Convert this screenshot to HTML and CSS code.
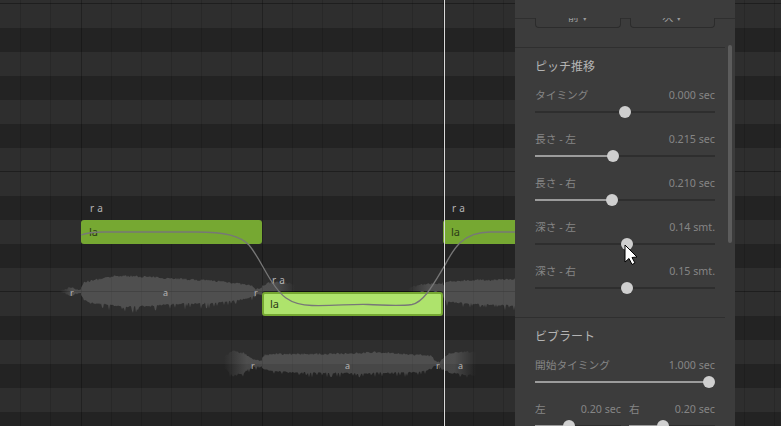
FILE: index.html
```html
<!DOCTYPE html>
<html lang="ja">

<head>
  <meta charset="UTF-8">
  <title>Piano Roll</title>
  <link rel="stylesheet" href="styles.css">
</head>

<body>

  <div class="roll">
    <div class="rows">
      <div class="row line"></div>
      <div class="row"></div>
      <div class="row dark"></div>
      <div class="row"></div>
      <div class="row dark"></div>
      <div class="row"></div>
      <div class="row dark"></div>
      <div class="row line"></div>
      <div class="row"></div>
      <div class="row dark"></div>
      <div class="row"></div>
      <div class="row dark"></div>
      <div class="row line"></div>
      <div class="row"></div>
      <div class="row dark"></div>
      <div class="row"></div>
      <div class="row dark"></div>
      <div class="row"></div>
      <div class="row dark"></div>
    </div>
    <div class="beats"></div>

    <svg class="layer" id="waves" width="781" height="426">
      <defs>
        <linearGradient id="fadeIn">
          <stop offset="0" stop-color="#9a9a9a" stop-opacity="0"></stop>
          <stop offset="0.6" stop-color="#9a9a9a" stop-opacity="0.3"></stop>
        </linearGradient>
        <linearGradient id="fadeOut">
          <stop offset="0.4" stop-color="#9a9a9a" stop-opacity="0.3"></stop>
          <stop offset="1" stop-color="#9a9a9a" stop-opacity="0"></stop>
        </linearGradient>
      </defs>
    </svg>

    <span class="phone small" style="left: 70px; top: 286px">r</span>
    <span class="phone small" style="left: 163px; top: 286px">a</span>
    <span class="phone small" style="left: 254px; top: 286px">r</span>
    <span class="phone small" style="left: 277px; top: 286px">r</span>
    <span class="phone small" style="left: 420px; top: 286px">r</span>
    <span class="phone small" style="left: 433px; top: 286px">a</span>
    <span class="phone small" style="left: 251px; top: 359px">r</span>
    <span class="phone small" style="left: 345px; top: 359px">a</span>
    <span class="phone small" style="left: 436px; top: 359px">r</span>
    <span class="phone small" style="left: 458px; top: 359px">a</span>

    <span class="phone" style="left: 90px; top: 201px">r a</span>
    <span class="phone" style="left: 272px; top: 273px">r a</span>
    <span class="phone" style="left: 452px; top: 201px">r a</span>

    <div class="note" style="left: 81px; top: 220px; width: 181px">la</div>
    <div class="note selected" style="left: 262px; top: 292px; width: 181px">la</div>
    <div class="note" style="left: 443px; top: 220px; width: 181px">la</div>

    <svg class="layer" width="781" height="426">
      <path class="pitch" d="M81 235 C86 233 92 232 104 232 L196 232 C226 232 240 236 249 245 C258 256 264 270 272 282 C280 294 288 305 312 305.500 C335 306 350 304 368 304.500 C385 305 398 306.500 412 304.500 C424 302 433 285 445 265 C453 250 462 232 490 232 L515 232"></path>
    </svg>

    <div class="playhead"></div>
  </div>

  <div class="panel">
    <div class="panel-top"></div>
    <div class="btn-row">
      <div class="btn"><span>前 ▾</span></div>
      <div class="btn"><span>次 ▾</span></div>
    </div>

    <div class="section">
      <h2>ピッチ推移</h2>

      <div class="param">
        <div class="param-head"><span>タイミング</span><span class="value">0.000 sec</span></div>
        <div class="track"><div class="fill none" style="width: 90px"></div></div>
      </div>
      <div class="param">
        <div class="param-head"><span>長さ - 左</span><span class="value">0.215 sec</span></div>
        <div class="track"><div class="fill" style="width: 78px"></div></div>
      </div>
      <div class="param">
        <div class="param-head"><span>長さ - 右</span><span class="value">0.210 sec</span></div>
        <div class="track"><div class="fill" style="width: 77px"></div></div>
      </div>
      <div class="param">
        <div class="param-head"><span>深さ - 左</span><span class="value">0.14 smt.</span></div>
        <div class="track"><div class="fill none" style="width: 92px"></div></div>
      </div>
      <div class="param">
        <div class="param-head"><span>深さ - 右</span><span class="value">0.15 smt.</span></div>
        <div class="track"><div class="fill none" style="width: 92px"></div></div>
      </div>
    </div>

    <div class="section last">
      <h2>ビブラート</h2>

      <div class="param">
        <div class="param-head"><span>開始タイミング</span><span class="value">1.000 sec</span></div>
        <div class="track"><div class="fill" style="width: 174px"></div></div>
      </div>
      <div class="param-pair">
        <div class="param">
          <div class="param-head"><span>左</span><span class="value">0.20 sec</span></div>
          <div class="track"><div class="fill" style="width: 34px"></div></div>
        </div>
        <div class="param">
          <div class="param-head"><span>右</span><span class="value">0.20 sec</span></div>
          <div class="track"><div class="fill" style="width: 34px"></div></div>
        </div>
      </div>
    </div>

    <div class="scrollbar"></div>
  </div>

  <svg class="cursor" width="15" height="22" viewBox="0 0 15 22">
    <path d="M1 1 L1 18 L5 14.500 L8 20.500 L11 19 L8 13.500 L13 13 Z" fill="#fff" stroke="#000" stroke-width="1"></path>
  </svg>

  <script src="script.js"></script>
</body>

</html>
```

FILE: styles.css
```css
html,
body {
  margin: 0;
  height: 100%;
  overflow: hidden;
  background: #232323;
}

body {
  font-family: "Noto Sans", "Noto Sans CJK JP", sans-serif;
}

.roll {
  position: relative;
  width: 781px;
  height: 426px;
  overflow: hidden;
}

.rows {
  display: flex;
  flex-direction: column;
  margin-top: -20px;
}

.row {
  flex: none;
  height: 24px;
  box-sizing: border-box;
  background: #2e2e2e;
}

.row.dark {
  background: #232323;
}

.row.line {
  border-bottom: 1px solid #1e1e1e;
}

/* one bar is 181px: six beats, the last one a pixel wider */
.beats {
  position: absolute;
  inset: 0;
  background-image: linear-gradient(90deg,
      rgba(0, 0, 0, 0.28) 0 1px, transparent 1px 30px,
      rgba(0, 0, 0, 0.14) 30px 31px, transparent 31px 60px,
      rgba(0, 0, 0, 0.14) 60px 61px, transparent 61px 90px,
      rgba(0, 0, 0, 0.14) 90px 91px, transparent 91px 120px,
      rgba(0, 0, 0, 0.14) 120px 121px, transparent 121px 150px,
      rgba(0, 0, 0, 0.14) 150px 151px, transparent 151px 181px);
  background-size: 181px 100%;
  background-position: 81px 0;
}

.layer {
  position: absolute;
  left: 0;
  top: 0;
}

.phone {
  position: absolute;
  font-size: 10px;
  line-height: 14px;
  letter-spacing: 0.300px;
  color: #b4b4b4;
}

.phone.small {
  font-size: 9px;
  letter-spacing: 0;
}

.note {
  position: absolute;
  box-sizing: border-box;
  height: 24px;
  padding-left: 8px;
  border-radius: 3px;
  background: #76a832;
  color: #2c3b18;
  font-size: 11px;
  line-height: 24px;
}

.note.selected {
  padding-left: 6px;
  border: 2px solid #76a832;
  background: #aee36c;
  box-shadow: 0 -1px 0 rgba(0, 0, 0, 0.45);
  line-height: 20px;
}

.pitch {
  fill: none;
  stroke: #777;
  stroke-width: 1.300;
}

.playhead {
  position: absolute;
  left: 444px;
  top: 0;
  width: 1px;
  height: 426px;
  background: #d9d9d9;
}

.panel {
  position: absolute;
  left: 515px;
  top: 0;
  width: 220px;
  height: 426px;
  overflow: hidden;
  background: #3c3c3c;
}

.panel-top {
  height: 19px;
  box-sizing: border-box;
  border-bottom: 1px solid #2f2f2f;
}

.btn-row {
  display: flex;
  gap: 9px;
  margin: -1px 20px 0;
}

.btn {
  flex: 1;
  height: 10px;
  box-sizing: border-box;
  overflow: hidden;
  border: 1px solid #2c2c2c;
  border-top: none;
  border-radius: 0 0 4px 4px;
  background: #3c3c3c;
  color: #9c9c9c;
  font-size: 11px;
  line-height: 16px;
  text-align: center;
}

.btn span {
  display: block;
  margin-top: -9px;
}

.section {
  margin: 19px 10px 0 0;
  padding: 11px 10px 0 20px;
  border-top: 1px solid #2f2f2f;
}

.section.last {
  margin-top: 10px;
}

h2 {
  margin: 0 0 12px;
  color: #b4b4b4;
  font-size: 12px;
  font-weight: normal;
  line-height: 16px;
}

.param {
  height: 44px;
}

.param-head {
  display: flex;
  justify-content: space-between;
  color: #858585;
  font-size: 10.700px;
  line-height: 16px;
}

.track {
  position: relative;
  height: 2px;
  margin-top: 8px;
  background: #2e2e2e;
}

.fill {
  position: relative;
  height: 2px;
  background: #9c9c9c;
}

.fill.none {
  background: none;
}

.fill::after {
  content: "";
  position: absolute;
  right: -6px;
  top: -5px;
  width: 12px;
  height: 12px;
  border-radius: 50%;
  background: #cfcfcf;
}

.param-pair {
  display: flex;
  gap: 8px;
}

.param-pair .param {
  flex: 1;
}

.scrollbar {
  position: absolute;
  left: 213px;
  top: 45px;
  width: 4px;
  height: 198px;
  border-radius: 2px;
  background: #5c5c5c;
}

.cursor {
  position: absolute;
  left: 624px;
  top: 244px;
}
```

FILE: script.js
```js
// waveforms: [x, top, bottom] points, filled in with small random teeth
const waves = [
  { fill: "url(#fadeIn)", pts: [[60, 292, 292], [66, 290, 294], [71, 288, 296], [76, 290, 294], [81, 291, 293]] },
  { pts: [[81, 289, 295], [84, 283, 299], [90, 282, 303], [100, 280, 304], [117, 277, 306], [130, 277, 307], [150, 278, 306], [165, 279, 305], [183, 280, 304], [197, 281, 304], [217, 282, 303], [235, 284, 301], [247, 286, 299], [252, 287, 297], [256, 290, 295], [262, 289, 295]] },
  { fill: "url(#fadeOut)", pts: [[262, 287, 296], [268, 284, 300], [280, 283, 300], [295, 285, 298]] },
  { fill: "url(#fadeIn)", pts: [[408, 289, 295], [425, 285, 298], [443, 284, 300]] },
  { pts: [[443, 287, 297], [446, 283, 302], [470, 281, 304], [490, 281, 305], [515, 280, 306]] },
  { fill: "url(#fadeIn)", pts: [[224, 358, 368], [233, 352, 376], [243, 354, 373], [253, 360, 367], [262, 362, 366]] },
  { pts: [[262, 358, 368], [265, 356, 370], [280, 355, 372], [300, 355, 373], [330, 355, 373], [360, 354, 374], [380, 353, 373], [400, 355, 373], [420, 356, 372], [432, 357, 369], [434, 361, 366], [440, 363, 365]] },
  { fill: "url(#fadeOut)", pts: [[440, 363, 365], [444, 358, 370], [450, 354, 373], [465, 353, 375], [476, 353, 376]] }
];

let seed = 7;
function rnd() {
  seed = (seed * 16807) % 2147483647;
  return seed / 2147483647;
}

function edge(pts, x, i) {
  for (let k = 0; k < pts.length - 1; k++) {
    if (x <= pts[k + 1][0]) {
      let t = (x - pts[k][0]) / (pts[k + 1][0] - pts[k][0]);
      return pts[k][i] + (pts[k + 1][i] - pts[k][i]) * t;
    }
  }
  return pts[pts.length - 1][i];
}

let svg = document.getElementById("waves");

waves.forEach(w => {
  let startX = w.pts[0][0];
  let endX = w.pts[w.pts.length - 1][0];
  let height = edge(w.pts, (startX + endX) / 2, 2) - edge(w.pts, (startX + endX) / 2, 1);
  let top = [];
  let bottom = [];
  for (let x = startX; x <= endX; x++) {
    let spike = rnd() < 0.3 ? height * 0.28 : 1.5;
    top.push(x + "," + (edge(w.pts, x, 1) - rnd() * 2).toFixed(1));
    bottom.unshift(x + "," + (edge(w.pts, x, 2) + rnd() * spike - 1).toFixed(1));
  }
  let poly = document.createElementNS("http://www.w3.org/2000/svg", "polygon");
  poly.setAttribute("points", top.concat(bottom).join(" "));
  if (w.fill) {
    poly.setAttribute("fill", w.fill);
  } else {
    poly.setAttribute("fill", "#9a9a9a");
    poly.setAttribute("fill-opacity", "0.3");
  }
  svg.appendChild(poly);
});
```
